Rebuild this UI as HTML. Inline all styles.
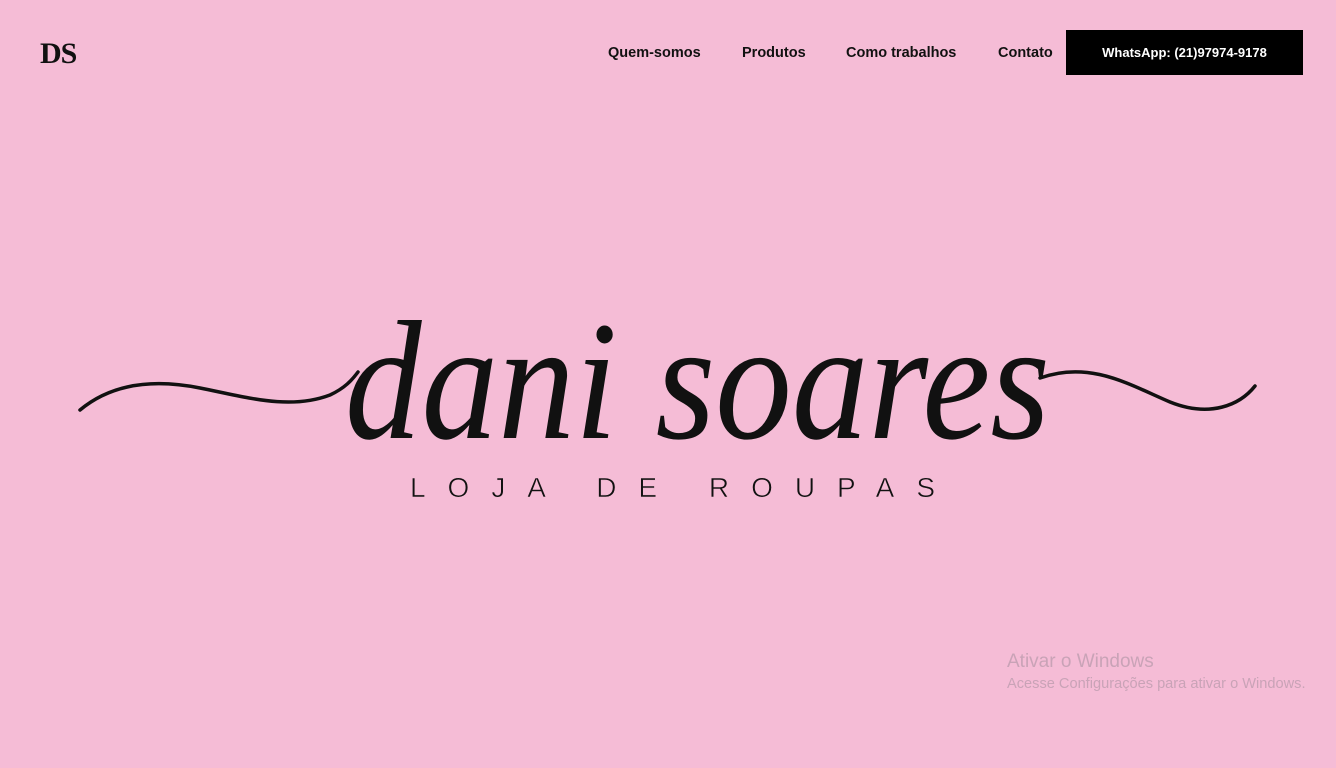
<!DOCTYPE html>
<html><head><meta charset="utf-8">
<style>
html,body{margin:0;padding:0}
body{width:1336px;height:768px;background:#f5bcd6;position:relative;overflow:hidden;font-family:"Liberation Sans",sans-serif}
.ds{position:absolute;left:40px;top:37px;font-family:"Liberation Serif",serif;font-weight:bold;font-size:30px;color:#111;letter-spacing:-1px}
.nav a{position:absolute;top:45px;font-size:14.5px;font-weight:bold;color:#111;text-decoration:none}
.btn{position:absolute;left:1066px;top:30px;width:237px;height:45px;background:#000;color:#fff;font-size:13px;font-weight:bold;text-align:center;line-height:45px}
.win1{position:absolute;left:1007px;top:651px;font-size:19px;color:#c9a3b7}
.win2{position:absolute;left:1007px;top:676px;font-size:14.6px;color:#c9a3b7}
</style></head><body>
<div class="ds">DS</div>
<div class="nav">
<a style="left:608px">Quem-somos</a>
<a style="left:742px">Produtos</a>
<a style="left:846px">Como trabalhos</a>
<a style="left:998px">Contato</a>
</div>
<div class="btn">WhatsApp: (21)97974-9178</div>
<svg width="1336" height="768" style="position:absolute;left:0;top:0">
<path d="M80 410 C110 385,150 378,200 388 C250 398,290 410,330 395 C345 388,352 380,358 372" fill="none" stroke="#111" stroke-width="3.5" stroke-linecap="round"/>
<path d="M1040 378 C1090 360,1130 385,1170 402 C1210 418,1240 405,1255 386" fill="none" stroke="#111" stroke-width="3.5" stroke-linecap="round"/>
<text x="345" y="438" font-family="Liberation Serif, serif" font-style="italic" font-size="170" fill="#111" textLength="705" lengthAdjust="spacingAndGlyphs">dani soares</text>
<text x="410" y="497" font-family="Liberation Sans, sans-serif" font-size="28" fill="#111" stroke="#f5bcd6" stroke-width="0.6" textLength="525" lengthAdjust="spacing">LOJA DE ROUPAS</text>
</svg>
<div class="win1">Ativar o Windows</div>
<div class="win2">Acesse Configurações para ativar o Windows.</div>
</body></html>
